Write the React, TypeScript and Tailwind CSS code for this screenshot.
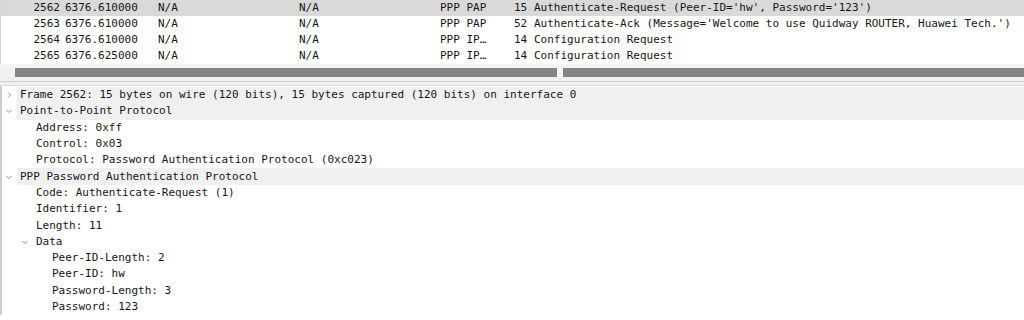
import { ReactNode } from "react";

type Packet = {
  no: string;
  time: string;
  src: string;
  dst: string;
  proto: string;
  len: string;
  info: string;
  selected?: boolean;
};

const packets: Packet[] = [
  {
    no: "2562",
    time: "6376.610000",
    src: "N/A",
    dst: "N/A",
    proto: "PPP PAP",
    len: "15",
    info: "Authenticate-Request (Peer-ID='hw', Password='123')",
    selected: true,
  },
  {
    no: "2563",
    time: "6376.610000",
    src: "N/A",
    dst: "N/A",
    proto: "PPP PAP",
    len: "52",
    info: "Authenticate-Ack (Message='Welcome to use Quidway ROUTER, Huawei Tech.')",
  },
  {
    no: "2564",
    time: "6376.610000",
    src: "N/A",
    dst: "N/A",
    proto: "PPP IP…",
    len: "14",
    info: "Configuration Request",
  },
  {
    no: "2565",
    time: "6376.625000",
    src: "N/A",
    dst: "N/A",
    proto: "PPP IP…",
    len: "14",
    info: "Configuration Request",
  },
];

type Node = {
  level: number;
  text: string;
  arrow?: "right" | "down";
};

const tree: Node[] = [
  {
    level: 0,
    arrow: "right",
    text: "Frame 2562: 15 bytes on wire (120 bits), 15 bytes captured (120 bits) on interface 0",
  },
  { level: 0, arrow: "down", text: "Point-to-Point Protocol" },
  { level: 1, text: "Address: 0xff" },
  { level: 1, text: "Control: 0x03" },
  { level: 1, text: "Protocol: Password Authentication Protocol (0xc023)" },
  { level: 0, arrow: "down", text: "PPP Password Authentication Protocol" },
  { level: 1, text: "Code: Authenticate-Request (1)" },
  { level: 1, text: "Identifier: 1" },
  { level: 1, text: "Length: 11" },
  { level: 1, arrow: "down", text: "Data" },
  { level: 2, text: "Peer-ID-Length: 2" },
  { level: 2, text: "Peer-ID: hw" },
  { level: 2, text: "Password-Length: 3" },
  { level: 2, text: "Password: 123" },
];

const indents = ["pl-[3px]", "pl-[19px]", "pl-[35px]"];

function Chevron({ dir }: { dir: "right" | "down" }) {
  return (
    <svg className="h-[16px] w-[16px] flex-none" viewBox="0 0 16 16" fill="none" aria-hidden="true">
      {dir === "right" ? (
        <path d="M7 5.5l2.5 2.5L7 10.5" stroke="#8a8a8a" strokeWidth="1" />
      ) : (
        <path d="M5.5 7l2.5 2.5L10.5 7" stroke="#8a8a8a" strokeWidth="1" />
      )}
    </svg>
  );
}

function Cell({ className, children }: { className: string; children: ReactNode }) {
  return <div className={`flex-none whitespace-pre ${className}`}>{children}</div>;
}

export default function App() {
  return (
    <div className="h-[320px] w-[1024px] overflow-hidden bg-white font-['DejaVu_Sans_Mono',monospace] text-[11px] text-[#161616]">
      {/* packet list */}
      <div className="h-[64px] border-l border-[#d4d4d4]">
        {packets.map((p) => (
          <div
            key={p.no}
            className={`flex h-[16px] items-center leading-[16px] ${p.selected ? "bg-[#d9d9d9]" : ""}`}
          >
            <Cell className="w-[59px] text-right">{p.no}</Cell>
            <Cell className="ml-[5px] w-[93px]">{p.time}</Cell>
            <Cell className="w-[141px]">{p.src}</Cell>
            <Cell className="w-[141px]">{p.dst}</Cell>
            <Cell className="w-[74px]">{p.proto}</Cell>
            <Cell className="w-[20px]">{p.len}</Cell>
            <Cell className="">{p.info}</Cell>
          </div>
        ))}
      </div>

      {/* horizontal scrollbar + splitter */}
      <div className="h-[4px] bg-[#f3f3f3]" />
      <div className="flex h-[9px] bg-[#f0f0f0]">
        <div className="w-[15px]" />
        <div className="w-[542px] bg-[#858585]" />
        <div className="w-[6px] bg-[#f7f7f7]" />
        <div className="flex-1 bg-[#858585]" />
      </div>
      <div className="h-[4px] bg-[#f0f0f0]" />
      <div className="h-[1px] bg-[#cfcfcf]" />
      <div className="h-[3px] bg-[#f0f0f0]" />
      <div className="h-[1px] bg-[#d9d9d9]" />

      {/* packet details */}
      <div className="border-l-2 border-[#cdcdcd] pt-[1px]">
        {tree.map((n, i) => (
          <div key={i} className={`flex h-[16.3px] items-center leading-[16px] ${indents[n.level]}`}>
            <div className="flex w-[12px] flex-none justify-center -ml-[2px] mr-[2px]">
              {n.arrow ? <Chevron dir={n.arrow} /> : null}
            </div>
            <div
              className={`flex h-full flex-1 items-center whitespace-pre pl-[3px] ${n.level === 0 ? "bg-[#f0f0f0]" : ""}`}
            >
              {n.text}
            </div>
          </div>
        ))}
      </div>
    </div>
  );
}
